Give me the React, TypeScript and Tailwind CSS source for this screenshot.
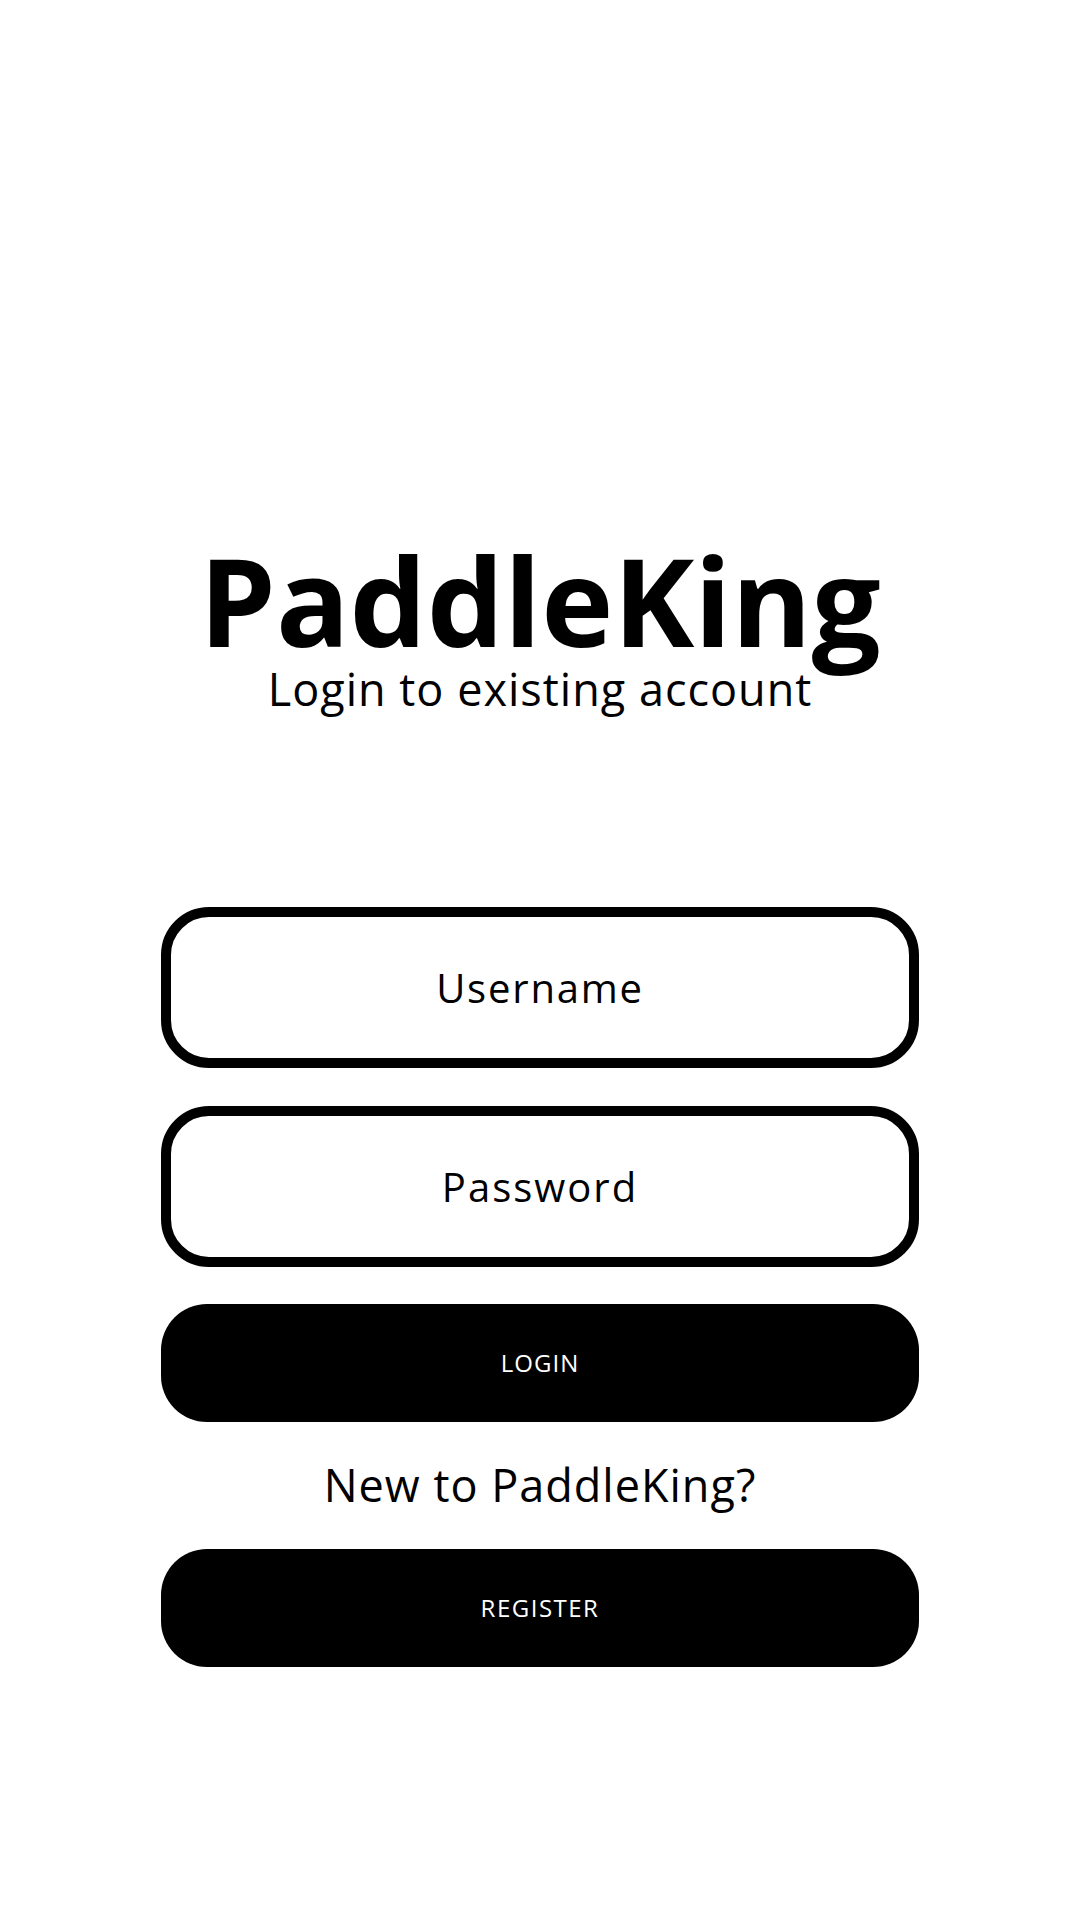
import { useState } from "react";

export default function App() {
  const [username, setUsername] = useState("");
  const [password, setPassword] = useState("");

  return (
    <div
      className="min-h-[1920px] w-full bg-white text-black flex flex-col items-center"
      style={{ fontFamily: '"Open Sans", "Noto Sans", sans-serif' }}
    >
      {/* Header */}
      <h1 className="mt-[539px] text-[122px] font-bold leading-none">PaddleKing</h1>
      <p className="mt-[5px] text-[45px] leading-none tracking-[1px]">Login to existing account</p>

      {/* Form */}
      <div className="mt-[196px] w-[758px] flex flex-col">
        <input
          type="text"
          value={username}
          onChange={(e) => setUsername(e.target.value)}
          placeholder="Username"
          className="h-[161px] w-full rounded-[48px] border-[10px] border-black bg-white text-center text-[40px] leading-none tracking-[1.8px] outline-none placeholder:text-black"
        />
        <input
          type="password"
          value={password}
          onChange={(e) => setPassword(e.target.value)}
          placeholder="Password"
          className="mt-[38px] h-[161px] w-full rounded-[48px] border-[10px] border-black bg-white text-center text-[40px] leading-none tracking-[2px] outline-none placeholder:text-black"
        />

        <button
          type="button"
          className="mt-[37px] h-[118px] w-full rounded-[46px] bg-black text-white text-[24px] leading-none tracking-[1px] uppercase"
        >
          Login
        </button>

        <p className="mt-[40px] text-center text-[45px] leading-none tracking-[1px]">New to PaddleKing?</p>

        <button
          type="button"
          className="mt-[42px] h-[118px] w-full rounded-[46px] bg-black text-white text-[24px] leading-none tracking-[1.5px] uppercase"
        >
          Register
        </button>
      </div>
    </div>
  );
}
